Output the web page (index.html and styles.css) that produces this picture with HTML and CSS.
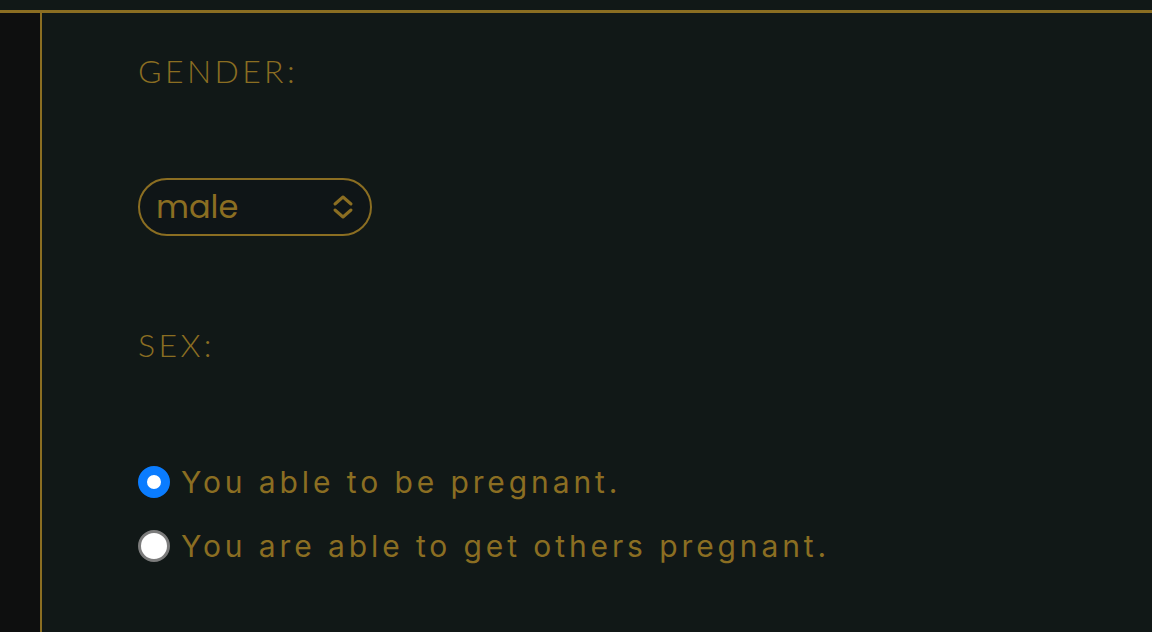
FILE: index.html
```html
<!DOCTYPE html>
<html>
<head>
<meta charset="utf-8">
<link rel="stylesheet" href="styles.css">
</head>
<body>
<div class="topbar"></div>
<div class="layout">
  <aside class="side"></aside>
  <main class="main">
    <div class="field">
      <div class="label">GENDER:</div>
      <div class="select">
        <span class="select-value">male</span>
        <svg class="chev" width="22" height="26" viewBox="0 0 22 26"><path d="M3 10 L11 3 L19 10 M3 16 L11 23 L19 16" fill="none" stroke="#8b6e22" stroke-width="3" stroke-linecap="round" stroke-linejoin="round"/></svg>
      </div>
    </div>
    <div class="field sex">
      <div class="label">SEX:</div>
      <div class="radios">
        <label class="radio-row"><span class="radio on"></span><span class="radio-text">You able to be pregnant.</span></label>
        <label class="radio-row"><span class="radio off"></span><span class="radio-text">You are able to get others pregnant.</span></label>
      </div>
    </div>
  </main>
</div>
</body>
</html>
```
FILE: styles.css
```css
html, body {
  margin: 0;
  padding: 0;
  height: 100%;
  background: #111817;
  overflow: hidden;
}
.topbar {
  height: 10px;
  background: #111817;
  border-bottom: 3px solid #8b6e22;
}
.layout {
  display: flex;
  height: 619px;
}
.side {
  width: 40px;
  background: #0e0f0f;
  border-right: 2px solid #8b6e22;
  flex: none;
}
.main {
  flex: 1;
  padding-left: 96px;
  color: #8b6e22;
}
.label {
  font-family: "Lato", sans-serif;
  font-weight: 300;
  font-size: 32px;
  letter-spacing: 3.4px;
  line-height: 40px;
}
.field:first-child .label {
  margin-top: 38px;
}
.select {
  margin-top: 87px;
  width: 234px;
  height: 58px;
  box-sizing: border-box;
  border: 2px solid #8b6e22;
  border-radius: 30px;
  background: #0f1517;
  display: flex;
  align-items: center;
  justify-content: space-between;
  padding: 0 16px 0 16px;
}
.select-value {
  font-family: "Poppins", "Inter", sans-serif;
  font-size: 32px;
  font-weight: 400;
  line-height: 1;
  margin-top: 0;
}
.chev { display: block; }
.sex .label {
  margin-top: 89px;
}
.radios {
  margin-top: 101px;
  display: flex;
  flex-direction: column;
  gap: 32px;
}
.radio-row {
  display: flex;
  align-items: center;
  gap: 11px;
  height: 32px;
}
.radio {
  width: 32px;
  height: 32px;
  border-radius: 50%;
  box-sizing: border-box;
  flex: none;
}
.radio.on {
  background: #fff;
  border: 9px solid #0a7cff;
}
.radio.off {
  background: #fff;
  border: 3px solid #7c7c7c;
}
.radio-text {
  font-family: "Inter", sans-serif;
  font-size: 30px;
  letter-spacing: 3.9px;
  line-height: 32px;
}
```
